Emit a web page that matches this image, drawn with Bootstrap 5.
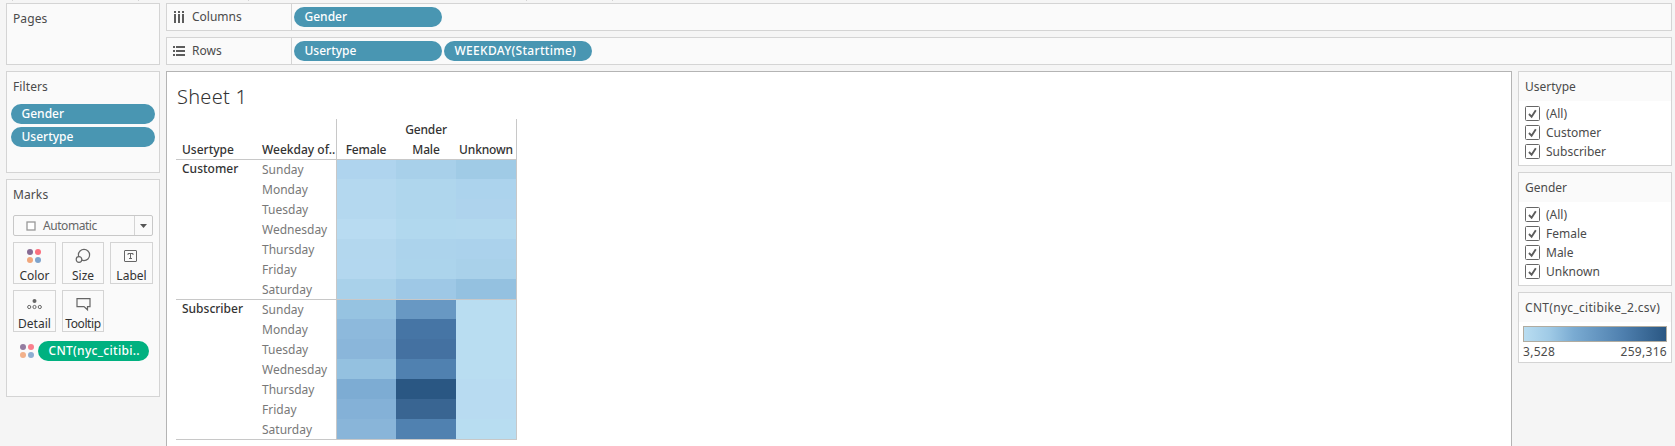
<!DOCTYPE html>
<html lang="en">
<head>
<meta charset="utf-8">
<title>Sheet 1</title>
<link href="https://cdn.jsdelivr.net/npm/bootstrap@5.3.0/dist/css/bootstrap.min.css" rel="stylesheet">
<style>
body{height:446px;overflow:hidden;background:#f5f5f5;font-family:"Noto Sans","Open Sans",sans-serif;font-size:12px;line-height:16px;color:#4b4b4b}
.topline{height:1px;flex:none;position:relative}
.topline i{position:absolute;top:0;width:1px;height:1px;background:#d4d4d4}
.pane{background:#fafafa;border:1px solid #d4d4d4}
.side{width:154px;margin-left:6px}
.side h2,.filterbox h2{font-size:12px;line-height:16px;margin:0;font-weight:400}
.side h2{padding:7px 0 0 6px;letter-spacing:.1px}
.pane-pages{height:62px}.pane-filters{height:102px}.pane-marks{height:218px}
.pill{display:block;height:20px;border-radius:10px;background:#4996b2;color:#fff;line-height:20px;padding-left:10.5px;font-weight:500;white-space:nowrap}
.wide{letter-spacing:.3px}
.shelf{height:28px;margin-right:3px}
.shelf-name{width:125px;border-right:1px solid #d4d4d4;padding-left:6px}
.shelf-name svg{margin-right:7px}
.shelf .pill{width:148px}
.main{margin-left:6px;min-width:0}
.sheet{width:1346px;background:#fff;border:1px solid #b4b4b4;border-bottom:0;padding-left:9px}
.sheet h1{font-size:20px;font-weight:300;line-height:24px;letter-spacing:.25px;margin:13px 0 0 1px;color:#333}
.mark-type{height:21px;margin:12px 6px 0;border:1px solid #c8c8c8;border-radius:2px;color:#666}
.mark-type span{width:121px;border-right:1px solid #d4d4d4;padding-left:12px;letter-spacing:-.45px}
.mark-type span svg{margin-right:7px}
.mark-grid{display:grid;grid-template-columns:43px 42px 43px;gap:6px;margin:6px 6px 0}
.mark-btn{height:42px;border:1px solid #d4d4d4;color:#333;text-align:center;padding-top:5px}
.mark-btn svg{display:block;margin:0 auto}
.mark-btn.odd svg{margin-left:13px}
.mark-btn b{display:block;font-weight:400;line-height:16px;margin:4px -4px 0}
.cross{display:grid;grid-template-columns:80px 80px 60px 60px 60px;grid-template-rows:20px 20px repeat(14,20px);width:341px;margin-top:10px;border-bottom:1px solid #c8c8c8;color:#333;position:relative}
.cross>div{line-height:20px;white-space:nowrap;padding-top:1px}
.hd{font-weight:500;color:#333}
.hd.text-center{letter-spacing:-.15px}
.day{color:#787878;padding-left:6px}
.vr-l{position:absolute;top:0;bottom:0;width:1px;background:#c8c8c8;padding:0!important}
.hr-l{position:absolute;left:0;right:0;height:1px;background:#c8c8c8;padding:0!important}
.filterbox{width:154px;border:1px solid #d4d4d4;background:#fff;margin-bottom:6px}
.filterbox h2{height:29px;background:#fafafa;padding:7px 0 0 6px}
.opts{padding:3px 0 4px}
.opt{height:19px;padding-left:6px;gap:6px}
.ramp{height:16px;margin:4px 4px 0;border:1px solid #b1aca0;background:linear-gradient(90deg,#b9ddf1,#9fcae6 18%,#7aabd2 35%,#4e7fae 70%,#2a5783)}
</style>
</head>
<body class="d-flex flex-column">
<div class="topline"><i style="left:12px"></i><i style="left:138px"></i><i style="left:248px"></i><i style="left:526px"></i><i style="left:612px"></i></div>
<svg width="0" height="0" class="position-absolute">
<symbol id="dots" viewBox="0 0 14 14"><circle cx="3" cy="3" r="3" fill="#876b94"/><circle cx="11" cy="3" r="3" fill="#fb6f7e"/><circle cx="3" cy="11" r="3" fill="#f1a77c"/><circle cx="11" cy="11" r="3" fill="#7fa4cd"/></symbol>
<symbol id="chk" viewBox="0 0 15 15"><rect x=".5" y=".5" width="14" height="14" rx="1" fill="#fff" stroke="#666"/><path d="M4 8l2.6 2.8L10.8 4.3" fill="none" stroke="#5c5c5c" stroke-width="1.9"/></symbol>
</svg>
<div class="d-flex flex-grow-1" style="padding-top:2px;min-height:0">
 <aside class="side d-flex flex-column flex-shrink-0" style="gap:6px">
  <section class="pane pane-pages"><h2>Pages</h2></section>
  <section class="pane pane-filters"><h2>Filters</h2>
   <div class="d-flex flex-column" style="gap:3px;padding:9px 4px 0"><span class="pill">Gender</span><span class="pill">Usertype</span></div></section>
  <section class="pane pane-marks"><h2>Marks</h2>
   <div class="mark-type d-flex align-items-center"><span class="d-flex align-items-center h-100"><svg width="10" height="10"><rect x="1" y="1" width="8" height="8" fill="#fff" stroke="#999" stroke-width="1.3"/></svg>Automatic</span><svg width="7" height="4" class="ms-auto" style="margin-right:5px"><path d="M0 0h7L3.5 4z" fill="#555"/></svg></div>
   <div class="mark-grid">
    <div class="mark-btn odd"><svg width="14" height="16"><use href="#dots" y="1" width="14" height="14"/></svg><b>Color</b></div>
    <div class="mark-btn"><svg width="16" height="16" fill="#fafafa" stroke="#666" stroke-width="1.2"><circle cx="9" cy="7" r="5.6"/><circle cx="4" cy="11.5" r="2.8"/></svg><b>Size</b></div>
    <div class="mark-btn odd"><svg width="14" height="16" fill="none" stroke="#666"><rect x=".5" y="2.5" width="12" height="11" rx=".5"/><path d="M4 7V5.5h5V7M6.5 5.5v5M5 10.5h3"/></svg><b>Label</b></div>
    <div class="mark-btn odd"><svg width="15" height="16" fill="none" stroke="#666"><circle cx="7.5" cy="5" r="2" fill="#666" stroke="none"/><circle cx="2.2" cy="11" r="1.6"/><circle cx="7.5" cy="11" r="1.6"/><circle cx="12.8" cy="11" r="1.6"/></svg><b>Detail</b></div>
    <div class="mark-btn"><svg width="15" height="16" fill="none" stroke="#666" stroke-width="1.2"><path d="M1 2.6h13v8h-2.5v3.2L8 10.6H1z"/></svg><b style="letter-spacing:-.4px">Tooltip</b></div>
   </div>
   <div class="d-flex align-items-center" style="margin:9px 10px 0 13px;gap:4px"><svg width="14" height="14" class="flex-shrink-0" opacity=".88"><use href="#dots" width="14" height="14"/></svg><span class="pill wide flex-grow-1" style="background:#00b180">CNT(nyc_citibi..</span></div>
  </section>
 </aside>
 <div class="main d-flex flex-column flex-grow-1" style="gap:6px">
  <div class="shelf pane d-flex align-items-center"><div class="shelf-name d-flex align-items-center h-100"><svg width="12" height="12" fill="#5c5c5c"><path d="M1 0h2v2H1zM5 0h2v2H5zM9 0h2v2H9zM1 3h2v9H1zM5 3h2v9H5zM9 3h2v9H9z"/></svg>Columns</div><span class="pill" style="margin-left:2px">Gender</span></div>
  <div class="shelf pane d-flex align-items-center"><div class="shelf-name d-flex align-items-center h-100"><svg width="12" height="12" fill="#5c5c5c"><path d="M0 1h2v2H0zM0 5h2v2H0zM0 9h2v2H0zM3 1h9v2H3zM3 5h9v2H3zM3 9h9v2H3z"/></svg>Rows</div><span class="pill" style="margin:0 2px">Usertype</span><span class="pill wide">WEEKDAY(Starttime)</span></div>
  <div class="d-flex flex-grow-1">
   <main class="sheet"><h1>Sheet 1</h1><div class="cross" id="cross"></div></main>
   <aside style="margin-left:6px" id="filters"></aside>
  </div>
 </div>
</div>
<script>
const days=['Sunday','Monday','Tuesday','Wednesday','Thursday','Friday','Saturday'];
const groups=[
 ['Customer',['#afd4ee #a8d0ea #a0cbe6','#b4d8ef #afd6ed #acd3ed','#b4d8ef #afd6ed #aed3ed','#b8dbf1 #b1d8ee #b2d8ee','#b3d7ee #acd3ec #abd2ec','#b3d7ef #acd4ec #a9d1ea','#a9d1ea #9ec8e6 #94c1e0']],
 ['Subscriber',['#96c3e1 #6898c3 #b9ddf1','#8db9dc #4675a5 #b9ddf1','#8ab6da #4471a1 #b9ddf1','#94c1e0 #5081b0 #b9ddf1','#7dacd3 #2a5783 #b8dbf1','#84b1d7 #396592 #b8dbf1','#89b5d9 #5081b0 #b8ddf1']]];
const at=(r,c,cls,txt,extra='')=>`<div class="${cls}" style="grid-area:${r}/${c};${extra}">${txt}</div>`;
let h=at(1,'3/2/6','hd text-center','Gender')+at(2,1,'hd','Usertype','padding-left:6px')+at(2,2,'hd','Weekday of..','padding-left:6px')+['Female','Male','Unknown'].map((t,i)=>at(2,i+3,'hd text-center',t)).join('');
groups.forEach(([name,rows],g)=>{h+=at(3+g*7,1,'hd',name,'padding-left:6px;margin-top:-1px');
 rows.forEach((cs,i)=>{const r=3+g*7+i;h+=at(r,2,'day',days[i]);cs.split(' ').forEach((c,k)=>h+=at(r,k+3,'','','background:'+c));});});
h+='<div class="vr-l" style="left:160px"></div><div class="vr-l" style="right:0"></div><div class="hr-l" style="top:40px"></div><div class="hr-l" style="top:180px"></div>';
document.getElementById('cross').innerHTML=h;
const box=(t,os)=>`<section class="filterbox"><h2>${t}</h2><div class="opts">${os.map(o=>`<div class="opt d-flex align-items-center"><svg width="15" height="15"><use href="#chk" width="15" height="15"/></svg>${o}</div>`).join('')}</div></section>`;
document.getElementById('filters').innerHTML=box('Usertype',['(All)','Customer','Subscriber'])+box('Gender',['(All)','Female','Male','Unknown'])+'<section class="filterbox" style="height:71px"><h2 class="wide">CNT(nyc_citibike_2.csv)</h2><div class="ramp"></div><div class="wide d-flex justify-content-between" style="padding:2px 4px 0 4px"><span>3,528</span><span>259,316</span></div></section>';
</script>
<script src="https://cdn.jsdelivr.net/npm/bootstrap@5.3.0/dist/js/bootstrap.bundle.min.js"></script>
</body>
</html>
